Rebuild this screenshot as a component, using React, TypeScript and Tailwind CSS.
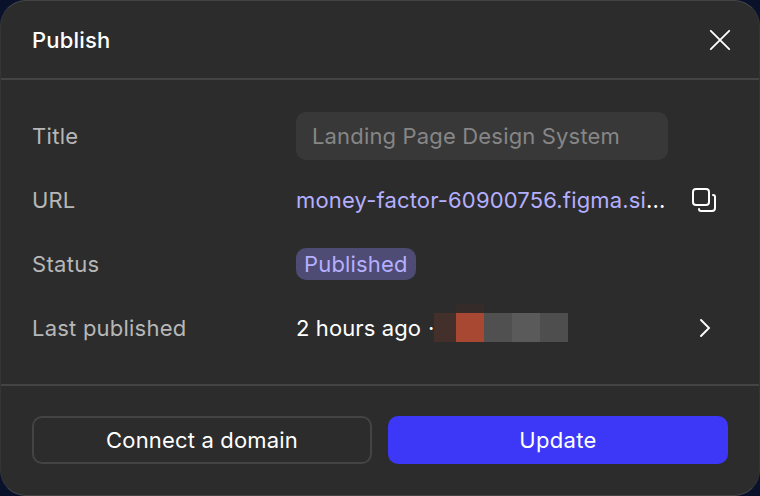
export default function App() {
  return (
    <div className="h-[496px] w-[760px] bg-[#0a122b] font-['Inter',sans-serif] text-[22px] leading-8 tracking-[0.165px]">
      <div className="flex h-full flex-col rounded-[26px] border border-x-[#353535] border-y-[#444444] bg-[#2c2c2c] text-white">
        <header className="flex h-[79px] shrink-0 items-center justify-between border-b-2 border-[#444444] pl-[31px] pr-[27px]">
          <h1 className="font-[550] tracking-[0.2px]">Publish</h1>
          <svg width="24" height="24" viewBox="0 0 24 24" fill="none" stroke="white" strokeWidth="1.8" strokeLinecap="round">
            <path d="M2.8 2.8l18.4 18.4M21.2 2.8L2.8 21.2" />
          </svg>
        </header>
        <main className="grid grow auto-rows-[64px] grid-cols-[264px_372px_1fr] content-start items-center pl-[31px] pt-[24px] text-[#b7b7b7]">
          <span className="tracking-[0.3px]">Title</span>
          <div className="flex h-12 items-center rounded-[10px] bg-[#383838] px-4 text-[#868686]">Landing Page Design System</div>
          <span />
          <span>URL</span>
          <span className="truncate text-white"><span className="text-[#b5afff]">money-factor-60900756.figma.si</span>...</span>
          <svg className="ml-6" width="24" height="24" viewBox="0 0 24 24" fill="none" stroke="white" strokeWidth="2">
            <rect x="1" y="1" width="16" height="16" rx="3" />
            <path d="M21 7a2 2 0 0 1 2 2v11a3 3 0 0 1-3 3H9a2 2 0 0 1-2-2" strokeLinecap="round" />
          </svg>
          <span className="tracking-[0.3px]">Status</span>
          <span className="justify-self-start rounded-[10px] bg-[#4e4b74] px-2 text-[#b5afff]">Published</span>
          <span />
          <span className="tracking-[0.22px]">Last published</span>
          <div className="flex items-center text-white">
            <span className="w-[138px] whitespace-nowrap tracking-[0.11px]">2 hours ago <span className="ml-[0.6px]">·</span></span>
            <div className="-mt-[10px] flex h-[38px] items-end">
              <i className="h-[29px] w-[22px] bg-[#44302b]" />
              <i className="h-[38px] w-7 border-t-[9px] border-[#352b29] bg-[#a84832]" />
              <i className="h-[29px] w-7 bg-[#505050]" />
              <i className="h-[29px] w-7 bg-[#5a5a5a]" />
              <i className="h-[29px] w-7 bg-[#4e4e4e]" />
            </div>
          </div>
          <svg className="ml-6" width="24" height="24" viewBox="0 0 24 24" fill="none" stroke="white" strokeWidth="1.9" strokeLinecap="round">
            <path d="M9 4l8 8-8 8" />
          </svg>
        </main>
        <footer className="grid h-[111px] shrink-0 grid-cols-2 gap-4 border-t-2 border-[#444444] px-[31px] pt-[30px]">
          <button className="h-12 rounded-[10px] border-2 border-[#444444]">Connect a domain</button>
          <button className="h-12 rounded-[10px] bg-[#3d38f7] tracking-[0.3px]">Update</button>
        </footer>
      </div>
    </div>
  );
}
